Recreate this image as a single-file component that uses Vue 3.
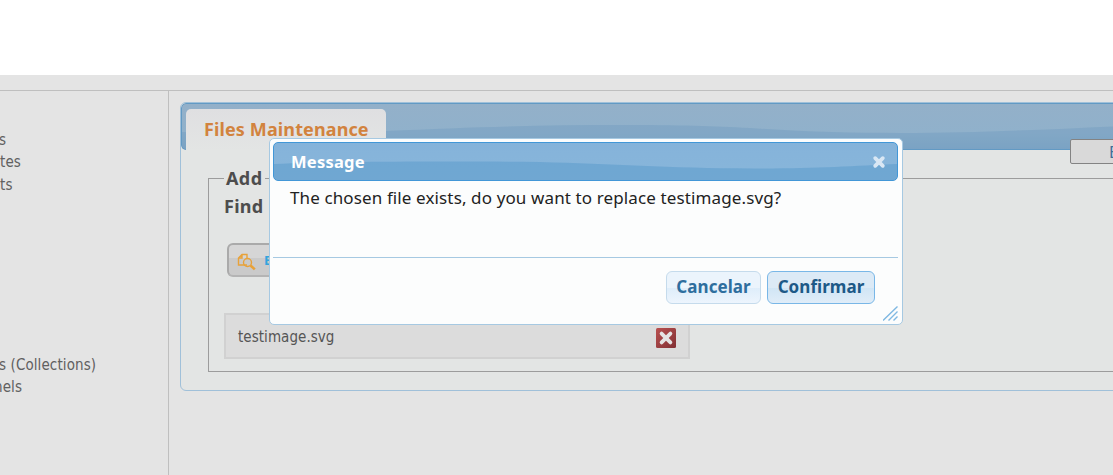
<script setup>
const menu = [
  { text: 's', name: 'a' },
  { text: 'tes', name: 'b' },
  { text: 'ts', name: 'c' },
  { text: 's (Collections)', name: 'd' },
  { text: 'nels', name: 'e' }
]
</script>

<template>
  <div class="page">
    <header class="top"></header>
    <div class="strip"></div>
    <div class="body">
      <nav class="side">
        <div v-for="m in menu" :key="m.name" class="item" :class="m.name"><span>{{ m.text }}</span></div>
      </nav>
      <main class="main">
        <section class="panel">
          <div class="head">
            <svg class="wave" width="940" height="45" viewBox="0 0 940 45">
              <path d="M0 28C60 30 140 30 204 27C290 23 360 21 438 21C500 21 530 22 568 24C620 28 670 29 718 29C800 29 870 25 940 22V45H0Z" fill="#6b98be" fill-opacity=".38" />
            </svg>
            <div class="tab"><span>Files Maintenance</span></div>
          </div>
          <div class="content">
            <div class="box">
              <div class="legend"><span>Add</span></div>
              <div class="find"><span>Find</span></div>
              <button class="browse">
                <svg width="20" height="18" viewBox="0 0 20 18" fill="none" stroke="#e8a23a" stroke-width="1.4">
                  <path d="M10 6V1.5H5L1.5 5V12H10M5 1.5V5H1.5" />
                  <circle cx="10.5" cy="9.5" r="4" />
                  <path d="M13.5 12.5L17.8 16.4" stroke-width="2.6" />
                </svg>
                <b>E</b>
              </button>
              <div class="file">
                <span class="name">testimage.svg</span>
                <svg class="del" width="20" height="20" viewBox="0 0 20 20">
                  <defs><linearGradient id="red" x2="1" y2="1"><stop stop-color="#b95050" /><stop offset="1" stop-color="#823034" /></linearGradient></defs>
                  <rect width="20" height="20" rx="1.5" fill="url(#red)" />
                  <path d="M5.6 5.6L14.4 14.4M14.4 5.6L5.6 14.4" stroke="#e6e4e4" stroke-width="3.8" stroke-linecap="round" />
                </svg>
              </div>
            </div>
          </div>
        </section>
      </main>
    </div>

    <button class="edge">E</button>

    <div class="dialog">
      <div class="title">
        <svg class="wave" width="623" height="37" viewBox="0 0 623 37">
          <path d="M0 21C60 19 140 18 266 19C340 21 390 25 480 25.5C540 25.5 580 23 623 21V37H0Z" fill="#4f94c8" fill-opacity=".42" />
        </svg>
        <span>Message</span>
        <svg class="close" width="14" height="14" viewBox="0 0 14 14"><path d="M3.2 3.2L10.8 10.8M10.8 3.2L3.2 10.8" stroke="#d9e7f4" stroke-width="3.8" stroke-linecap="round" /></svg>
      </div>
      <div class="text"><span>The chosen file exists, do you want to replace testimage.svg?</span></div>
      <div class="actions">
        <button class="cancel">Cancelar</button>
        <button class="confirm">Confirmar</button>
      </div>
      <svg class="grip" width="15" height="15" viewBox="0 0 15 15" stroke="#7fb8e2" stroke-width="1.4"><path d="M0 14.5L14.5 .5M5.5 14.5L14.5 5.5M10.5 14.5L14.5 10.5" /></svg>
    </div>
  </div>
</template>

<style>
body { margin: 0; overflow: hidden; }
</style>
<style scoped>
* { box-sizing: border-box; }
.page { position: relative; width: 1113px; height: 475px; overflow: hidden; background: #e4e4e4; font-family: "Noto Sans", sans-serif; color: #4d4d4d; }
button { font-family: inherit; margin: 0; padding: 0; }
.top { height: 75px; background: #fff; }
.strip { height: 16px; border-bottom: 1px solid #bfbfbf; }
.body { display: flex; height: 384px; }
.side { flex: none; width: 169px; border-right: 1px solid #bfbfbf; padding-top: 38px; font-family: "DejaVu Sans Condensed", "DejaVu Sans", sans-serif; font-size: 15px; letter-spacing: .1px; }
.item { height: 22.3px; line-height: 22px; color: #606060; white-space: nowrap; }
.item.a, .item.d { margin-left: -1px; }
.item.d { margin-top: 158px; }
.item.e { margin-left: -6px; }
.main { flex: 1; min-width: 0; padding: 11px 0 0 11px; }
.panel { width: 944px; height: 289px; border: 1px solid #a0c0d9; border-radius: 6px; background: #e3e5e4; overflow: hidden; }
.head { position: relative; height: 47px; border: 1px solid #629ac4; border-radius: 5px 0 0 5px; background: linear-gradient(#93b0c9, #90b1cb 65%, #84a9c8); padding: 5px 0 0 4px; }
.wave { position: absolute; left: 0; top: 0; }
.tab { position: relative; width: 200px; height: 42px; border-radius: 5px 5px 0 0; background: linear-gradient(#dfdfe1, #e3e5e4); padding-left: 18px; line-height: 41px; font-size: 18px; font-weight: 700; letter-spacing: .12px; color: #d2833e; white-space: nowrap; }
.content { padding: 28px 0 0 27px; }
.box { height: 194px; border: solid #9c9c9c; border-width: 1px 0 1px 1px; }
.legend { width: 41px; height: 27px; margin: -14px 0 0 15px; padding-left: 2px; background: #e3e5e4; font-size: 18px; font-weight: 700; line-height: 26px; letter-spacing: .4px; }
.find { height: 27px; margin: 1px 0 0 15px; font-size: 18px; font-weight: 700; line-height: 27px; letter-spacing: .3px; }
.browse { display: flex; align-items: center; width: 120px; height: 34px; margin: 23px 0 0 18px; padding-left: 8px; gap: 7px; border: 2px solid #aaa; border-bottom-color: #b4b4b4; border-radius: 6px; background: linear-gradient(#d6d6d6 42%, #cacaca 43%, #cacaca); font-size: 13px; color: #33a4dc; }
.browse svg { margin-top: 3px; }
.file { display: flex; align-items: center; justify-content: space-between; width: 466px; height: 46px; margin: 36px 0 0 15px; padding: 0 12px; border: 2px solid #d1d1d1; background: #dcdcdc; font-family: "DejaVu Sans Condensed", "DejaVu Sans", sans-serif; font-size: 15px; letter-spacing: .05px; color: #555; }
.name { margin-top: 2px; }
.del { margin-top: 4px; }
.edge { position: absolute; left: 1070px; top: 139px; width: 100px; height: 25px; border: 1px solid #838383; border-radius: 2px; background: #d9d9d9; text-align: left; padding-left: 38px; font-size: 16px; line-height: 22px; color: #406e9a; }
.dialog { position: absolute; left: 269px; top: 138px; width: 634px; height: 187px; padding: 3px; border: 1px solid #a6c9e2; border-radius: 5px; background: #fcfdfd; color: #222; }
.title { position: relative; display: flex; justify-content: space-between; align-items: center; width: 625px; height: 39px; padding: 0 11px 0 17px; border: 1px solid #4297d7; border-radius: 5px; background: linear-gradient(#85b3da, #88b6da); overflow: hidden; font-size: 16.5px; font-weight: 700; letter-spacing: .25px; color: #fff; }
.title span, .close { position: relative; }
.text { width: 625px; height: 77px; padding: 6px 0 0 17px; font-size: 17px; line-height: 22px; letter-spacing: .12px; white-space: nowrap; border-bottom: 1px solid #a6c9e2; }
.actions { display: flex; gap: 6px; padding: 13px 0 0 393px; }
.actions button { height: 33px; border-radius: 6px; font-size: 17px; font-weight: 700; letter-spacing: .05px; padding-bottom: 3px; }
.cancel { width: 95px; border: 1px solid #c5dbec; background: linear-gradient(#ebf4fc 50%, #deedfa 51%, #edf5fd); color: #2e6e9e; }
.confirm { width: 108px; border: 1px solid #79b7e7; background: linear-gradient(#dceaf6 50%, #d0e5f5 51%, #e0edf8); color: #1d5987; }
.grip { position: absolute; right: 4px; bottom: 3px; }
</style>
